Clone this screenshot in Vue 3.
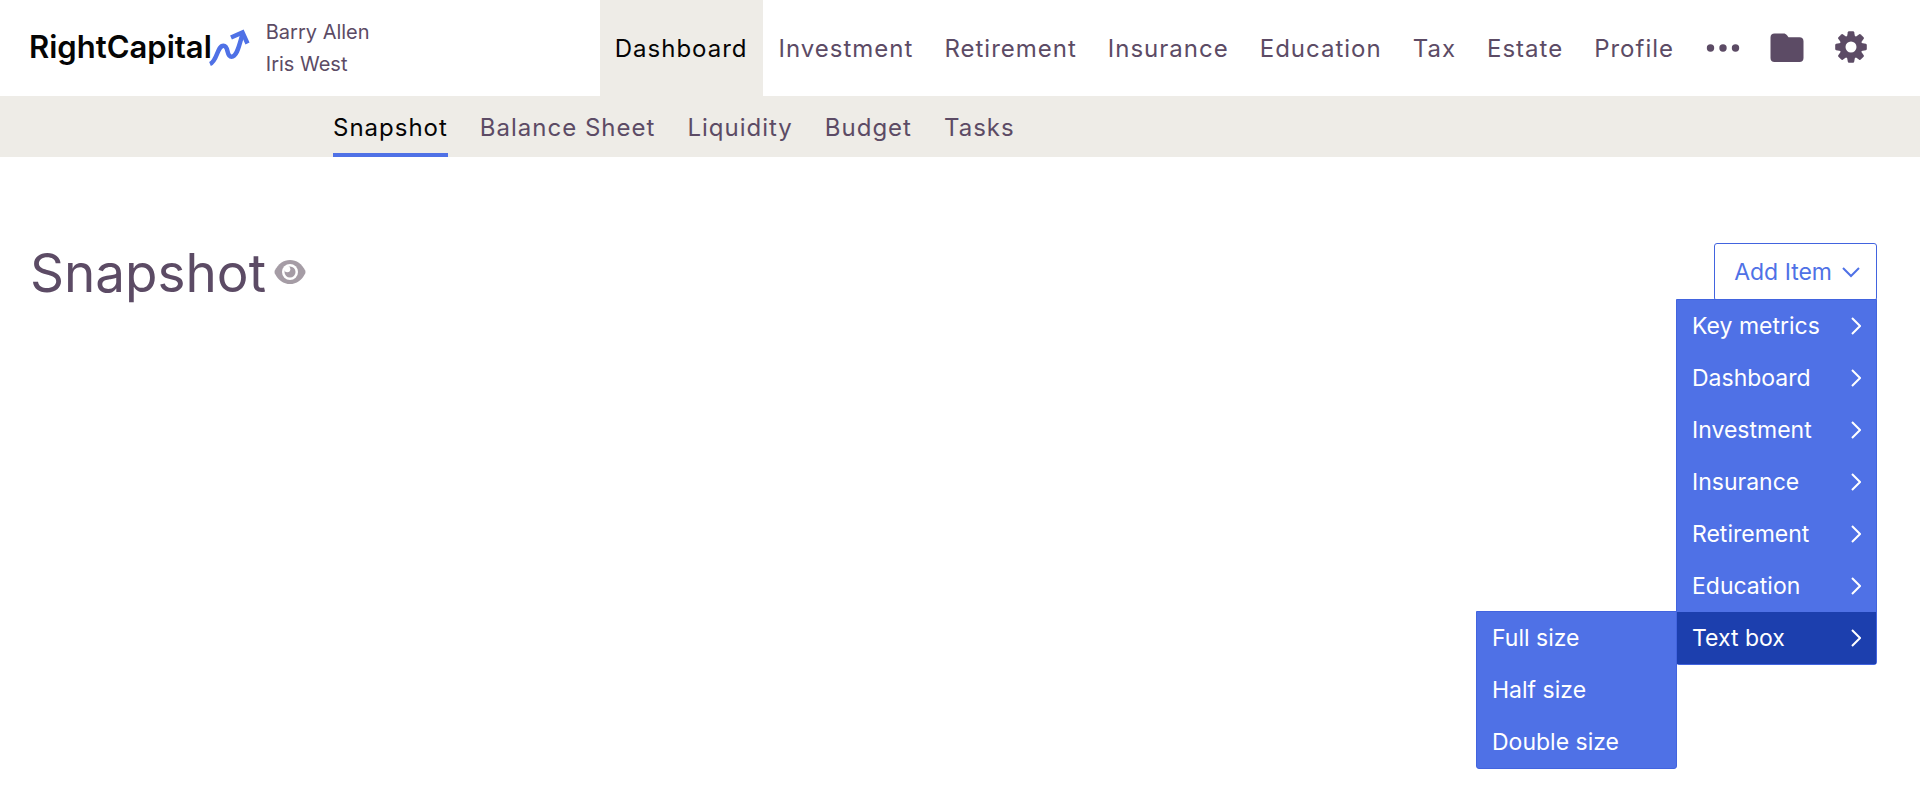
<script setup>
import { ref } from 'vue'

const clients = ['Barry Allen', 'Iris West']
const sections = ['Dashboard', 'Investment', 'Retirement', 'Insurance', 'Education', 'Tax', 'Estate', 'Profile']
const pages = ['Snapshot', 'Balance Sheet', 'Liquidity', 'Budget', 'Tasks']
const categories = ['Key metrics', 'Dashboard', 'Investment', 'Insurance', 'Retirement', 'Education', 'Text box']
const sizes = ['Full size', 'Half size', 'Double size']
const teeth = [0, 45, 90, 135, 180, 225, 270, 315]

const activeSection = ref('Dashboard')
const activePage = ref('Snapshot')
const activeCategory = ref('Text box')
const menuOpen = ref(true)
</script>

<template>
  <div class="app">
    <header class="topbar">
      <a class="brand" href="#" aria-label="RightCapital home">
        <span class="brand-name">RightCapital</span>
        <svg class="brand-mark" width="42" height="38" viewBox="0 0 42 38" fill="none" aria-hidden="true">
          <path d="M1 35 C8.500 32 8 16.700 14.500 16.700 C20 16.700 17 27.700 22.500 27.700 C28 27.700 30 17 33.500 5" stroke-width="4.500" />
          <path d="M22 8.500 L33.500 3.500 L38.500 14.500" stroke-width="4.500" />
        </svg>
      </a>
      <div class="clients">
        <span v-for="name in clients" :key="name">{{ name }}</span>
      </div>
      <nav class="sections" aria-label="Main">
        <a
          v-for="item in sections"
          :key="item"
          href="#"
          class="section"
          :class="{ active: item === activeSection }"
          @click.prevent="activeSection = item"
        >{{ item }}</a>
      </nav>
      <div class="tools">
        <button type="button" class="tool" aria-label="More">
          <svg width="34" height="34" viewBox="0 0 34 34" aria-hidden="true">
            <circle cx="4.500" cy="17" r="3.700" />
            <circle cx="17" cy="17" r="3.700" />
            <circle cx="29.500" cy="17" r="3.700" />
          </svg>
        </button>
        <button type="button" class="tool" aria-label="Files">
          <svg width="34" height="34" viewBox="0 0 34 34" aria-hidden="true">
            <path d="M4.500 2.500 H13.500 C15 2.500 16 3 17 4.300 L18.500 6.300 H29.500 C32 6.300 33.500 7.800 33.500 10.300 V27 C33.500 29.500 32 31 29.500 31 H4.500 C2 31 .5 29.500 .5 27 V6.500 C.5 4 2 2.500 4.500 2.500 Z" />
          </svg>
        </button>
        <button type="button" class="tool" aria-label="Settings">
          <svg width="34" height="34" viewBox="0 1 34 34" aria-hidden="true">
            <path
              v-for="angle in teeth"
              :key="angle"
              d="M12.800 8 L13.800 2.200 Q14 1.200 15 1.200 H19 Q20 1.200 20.200 2.200 L21.200 8 Z"
              :transform="`rotate(${angle} 17 17)`"
            />
            <circle class="gear-ring" cx="17" cy="17" r="8.500" />
          </svg>
        </button>
      </div>
    </header>

    <nav class="pages" aria-label="Dashboard pages">
      <a
        v-for="item in pages"
        :key="item"
        href="#"
        class="page"
        :class="{ active: item === activePage }"
        @click.prevent="activePage = item"
      >{{ item }}</a>
    </nav>

    <main class="content">
      <h1 class="title">Snapshot</h1>
      <button type="button" class="visibility" aria-label="Toggle visibility">
        <svg width="32" height="26" viewBox="0 0 32 26" aria-hidden="true">
          <path class="eye" d="M.8 11.600 C4 5 9.500 1 16 1 S28 5 31.200 11.600 Q31.800 13 31.200 14.400 C28 21 22.500 25 16 25 S4 21 .8 14.400 Q.2 13 .8 11.600 Z" />
          <circle class="white" cx="16" cy="13" r="8" />
          <circle class="eye" cx="16" cy="13" r="5.500" />
          <circle class="white" cx="13.300" cy="10.300" r="3" />
        </svg>
      </button>

      <div class="add">
        <button type="button" class="add-button" aria-haspopup="menu" :aria-expanded="menuOpen" @click="menuOpen = !menuOpen">
          Add Item
          <svg width="18" height="18" viewBox="0 0 18 18" fill="none" aria-hidden="true">
            <path d="M1 5 L9 13 L17 5" />
          </svg>
        </button>
        <ul v-if="menuOpen" class="menu" role="menu">
          <li v-for="item in categories" :key="item" class="entry" role="none">
            <button
              type="button"
              role="menuitem"
              class="option"
              :class="{ active: item === activeCategory }"
              @mouseenter="activeCategory = item"
            >
              {{ item }}
              <svg width="10" height="18" viewBox="0 0 10 18" fill="none" aria-hidden="true">
                <path d="M1 1 L9 9 L1 17" />
              </svg>
            </button>
            <ul v-if="item === 'Text box' && activeCategory === item" class="menu submenu" role="menu">
              <li v-for="size in sizes" :key="size" role="none">
                <button type="button" role="menuitem" class="option">{{ size }}</button>
              </li>
            </ul>
          </li>
        </ul>
      </div>
    </main>
  </div>
</template>

<style>
body {
  margin: 0;
  background: #fff;
}
</style>

<style scoped>
.app {
  min-height: 100vh;
}

.app,
button {
  font-family: Inter, "Liberation Sans", sans-serif;
}

.app * {
  box-sizing: border-box;
}

a {
  color: inherit;
  text-decoration: none;
}

button {
  margin: 0;
  padding: 0;
  border: 0;
  background: none;
  color: inherit;
  cursor: pointer;
}

svg {
  display: block;
  flex: none;
}

.topbar {
  display: flex;
  align-items: center;
  height: 96px;
  padding: 0 52px 0 29px;
  background: #fff;
  color: #5c4b65;
}

.brand {
  display: flex;
  align-items: center;
}

.brand-name {
  color: #050505;
  font-size: 31px;
  font-weight: 600;
  line-height: 36px;
  padding-bottom: 2px;
}

.brand-mark {
  margin-left: -3px;
  stroke: #4f71e6;
}

.clients {
  display: flex;
  flex-direction: column;
  margin-left: 15px;
  font-size: 20px;
  line-height: 32px;
}

.sections {
  display: flex;
  align-self: stretch;
  gap: 1px;
  margin-left: auto;
}

.section {
  display: flex;
  align-items: center;
  padding: 0 15px;
  font-size: 24px;
  letter-spacing: 1px;
}

.section.active {
  background: #eeece7;
  color: #050505;
}

.tools {
  display: flex;
  gap: 30px;
  margin-left: 17px;
  fill: #5c4b65;
}

.gear-ring {
  fill: none;
  stroke: #5c4b65;
  stroke-width: 6px;
}

.pages {
  display: flex;
  gap: 32px;
  height: 61px;
  padding-left: 333px;
  background: #eeece7;
  color: #5c4b65;
}

.page {
  display: flex;
  align-items: center;
  padding-top: 6px;
  border-bottom: 4px solid transparent;
  font-size: 24px;
  letter-spacing: 1px;
}

.page.active {
  border-color: #4f71e6;
  color: #050505;
}

.content {
  display: flex;
  align-items: center;
  padding: 86px 43px 0 30px;
}

.title {
  margin: 0;
  padding-top: 2px;
  color: #5c4b65;
  font-size: 53px;
  font-weight: 400;
  line-height: 56px;
}

.visibility {
  margin-left: 8px;
}

.eye {
  fill: #a59ca5;
}

.white {
  fill: #fff;
}

.add {
  position: relative;
  margin-left: auto;
}

.add-button {
  display: flex;
  align-items: center;
  gap: 10px;
  height: 58px;
  padding: 0 16px 0 19px;
  border: 1px solid #4264df;
  border-radius: 3px;
  color: #4f71e6;
  font-size: 23px;
}

.add-button svg {
  stroke: #4f71e6;
  stroke-width: 2px;
}

.menu {
  position: absolute;
  top: 56px;
  right: 0;
  z-index: 1;
  width: 201px;
  margin: 0;
  padding: 0;
  border: 1px solid #4264df;
  border-radius: 0 0 3px 3px;
  background: #4f71e6;
  list-style: none;
}

.entry {
  position: relative;
}

.submenu {
  top: -1px;
  right: 100%;
}

.option {
  display: flex;
  align-items: center;
  justify-content: space-between;
  width: 100%;
  height: 52px;
  padding: 0 15px;
  color: #fff;
  font-size: 23px;
  text-align: left;
}

.option.active {
  background: #1c3fae;
}

.option svg {
  stroke: #fff;
  stroke-width: 2px;
}
</style>
